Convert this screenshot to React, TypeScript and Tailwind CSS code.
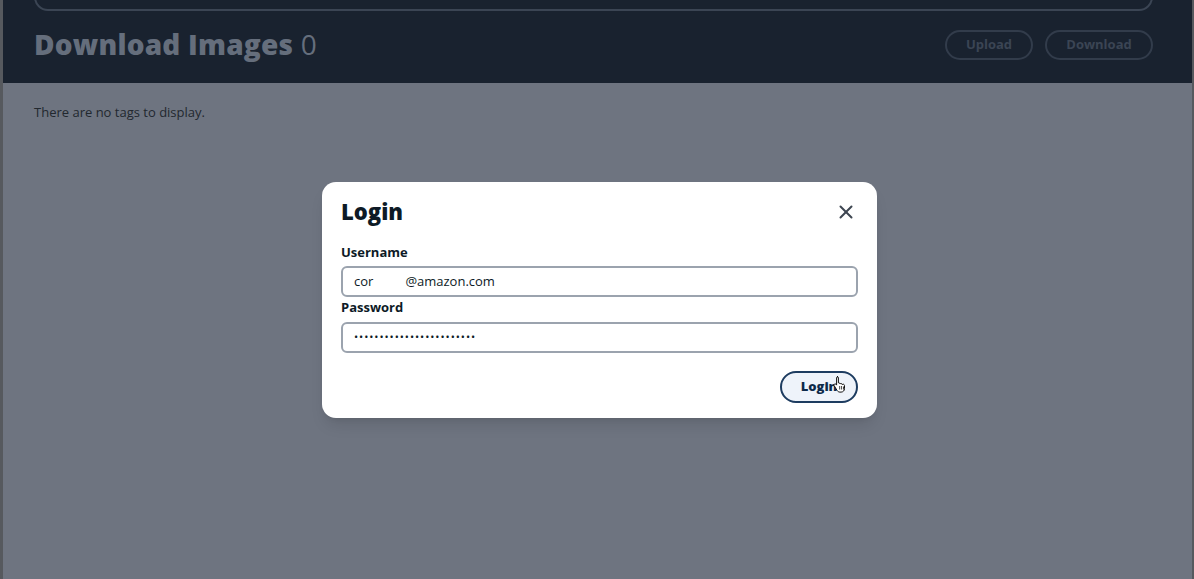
import { X } from "lucide-react";

export default function App() {
  return (
    <div
      className="h-[579px] w-[1194px] overflow-hidden bg-[#56595e] pl-[3px] pr-[2px]"
      style={{ fontFamily: '"Open Sans", "Noto Sans", sans-serif' }}
    >
      <div className="relative flex h-full flex-col bg-[#6e7480]">
        {/* Header (dimmed under overlay) */}
        <header className="h-[83px] bg-[#19222f] pl-[31px] pr-[39px]">
          <div className="-mt-[20px] h-[31px] rounded-b-[14px] border-[2px] border-[#3b4554]" />
          <div className="mt-[16px] flex items-center justify-between">
            <h1 className="text-[28px] leading-[34px] font-extrabold tracking-[0.2px] text-[#656e7c]">
              Download Images <span className="font-normal">0</span>
            </h1>
            <div className="mt-[1px] flex gap-3">
              <button className="h-[30px] w-[88px] rounded-full border-[2px] border-[#323c4b] text-[13px] font-bold text-[#3b4554]">
                Upload
              </button>
              <button className="h-[30px] w-[108px] rounded-full border-[2px] border-[#323c4b] text-[13px] font-bold text-[#3b4554]">
                Download
              </button>
            </div>
          </div>
        </header>

        <p className="mt-[20px] px-[31px] text-[13px] text-[#22282f]">There are no tags to display.</p>

        {/* Modal */}
        <div className="absolute left-[319px] top-[182px] w-[555px] rounded-[14px] bg-white px-[19px] pt-[14px] pb-[15px] shadow-lg">
          <div className="flex items-center justify-between">
            <h2 className="text-[22px] leading-[30px] font-extrabold text-[#0d1a26]">Login</h2>
            <X className="mr-[1px] mt-[2px] h-[22px] w-[22px] text-[#3e4651]" strokeWidth={2.2} />
          </div>
          <label className="mt-[17px] block text-[13px] leading-[18px] font-bold text-[#0d1a26]">Username</label>
          <div className="mt-[5px] flex h-[31px] items-center rounded-[6px] border-[2px] border-[#9ba3ae] px-[11px] text-[13px] text-[#0d1a26]">
            cor<span className="inline-block w-[32px]" />@amazon.com
          </div>
          <label className="mt-[1px] block text-[13px] leading-[18px] font-bold text-[#0d1a26]">Password</label>
          <div className="mt-[6px] flex h-[31px] items-center rounded-[6px] border-[2px] border-[#9ba3ae] px-[11px] text-[11px] tracking-[0.95px] text-[#0d1a26]">
            ••••••••••••••••••••••••
          </div>
          <div className="mt-[18px] flex justify-end">
            <button className="relative h-[32px] w-[78px] rounded-full border-[2px] border-[#1d3c60] bg-[#eef3fa] text-[13px] font-extrabold text-[#0d2a4a]">
              Login
              <svg
                className="absolute left-[51px] top-[2px]"
                width="14"
                height="18"
                viewBox="0 0 14 18"
              >
                <path
                  d="M4 1.5c.8 0 1.4.6 1.4 1.4v5l.3-.1c.8 0 1.3.5 1.3 1.1.3-.3.7-.4 1-.4.6 0 1.1.4 1.2 1 .3-.2.6-.3.9-.3.8 0 1.4.6 1.4 1.5v3c0 1.8-1.4 3.4-3.4 3.4H7c-1.2 0-2.2-.6-2.9-1.6L1.2 10.7c-.4-.6-.2-1.3.4-1.6.5-.3 1.1-.2 1.5.3l.5.7V2.9c0-.8.6-1.4 1.4-1.4z"
                  fill="white"
                  stroke="#111"
                  strokeWidth="1"
                />
                <path d="M6.7 11v3.5M8.6 11v3.5M10.5 11.5v3" stroke="#111" strokeWidth="0.8" />
              </svg>
            </button>
          </div>
        </div>
      </div>
    </div>
  );
}
